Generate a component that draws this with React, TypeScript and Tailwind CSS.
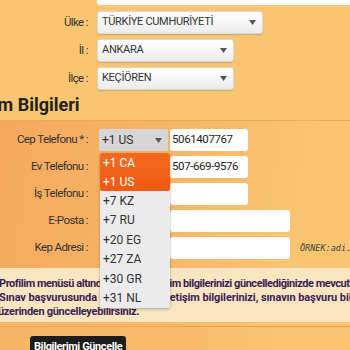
import React from "react";

const Arrow = () => (
  <svg width="7" height="5" viewBox="0 0 7 5" className="shrink-0">
    <path d="M0 0 L7 0 L3.5 5 Z" fill="#555" />
  </svg>
);

function Select({ text, w }: { text: string; w: string }) {
  return (
    <div
      className={`${w} h-[23px] shrink-0 flex items-center justify-between pl-[4px] pr-[6px] rounded-[3px] bg-gradient-to-b from-[#ffffff] to-[#ececec] border border-[#d8d8d8] shadow-[0_1px_1px_rgba(0,0,0,0.15)] text-[11px] tracking-[-0.3px] text-[#333] whitespace-nowrap`}
    >
      <span>{text}</span>
      <Arrow />
    </div>
  );
}

function Label({ children }: { children: React.ReactNode }) {
  return (
    <div className="w-[88px] shrink-0 text-right text-[11.5px] tracking-[-0.6px] text-[#333] leading-none whitespace-nowrap">
      {children}
    </div>
  );
}

function Input({ w, value }: { w: string; value?: string }) {
  return (
    <div
      className={`${w} h-[22px] shrink-0 bg-white rounded-[3px] flex items-center px-[2px] text-[11.5px] tracking-[-0.4px] text-[#222] whitespace-nowrap overflow-hidden`}
    >
      {value}
    </div>
  );
}

export default function App() {
  const opts = ["+7 KZ", "+7 RU", "+20 EG", "+27 ZA", "+30 GR", "+31 NL"];
  return (
    <div className="relative w-[350px] h-[350px] overflow-hidden bg-[#f9c570] font-['Roboto',sans-serif]">
      {/* top area */}
      <div className="h-[5px] ml-[97px] bg-white rounded-bl-[3px]" />
      <div className="flex flex-col gap-[5px] pt-[6px]">
        <div className="flex items-center gap-[9px]">
          <Label>Ülke :</Label>
          <Select text="TÜRKİYE CUMHURİYETİ" w="w-[166px]" />
        </div>
        <div className="flex items-center gap-[9px]">
          <Label>İl :</Label>
          <Select text="ANKARA" w="w-[137px]" />
        </div>
        <div className="flex items-center gap-[9px]">
          <Label>İlçe :</Label>
          <Select text="KEÇİÖREN" w="w-[137px]" />
        </div>
      </div>
      <div className="mt-[4px] -ml-[47px] text-[18px] font-bold text-[#222] leading-[22px] whitespace-nowrap">
        İletişim Bilgileri
      </div>
      <div className="mt-[4px] h-[1px] bg-[#e9a95e]" />
      {/* lower area */}
      <div className="relative bg-[linear-gradient(100deg,#f5a85e_0%,#f7b567_45%,#f9c570_80%)]">
        <div className="absolute left-[-60px] top-[150px] w-[260px] h-[120px] rounded-[50%] bg-[#f8bb6a] opacity-60 blur-[8px]" />
        <div className="relative flex flex-col gap-[5px] pt-[8px]">
          <div className="flex items-center gap-[11px]">
            <Label>Cep Telefonu * :</Label>
            <div className="flex items-center gap-[2px]">
              <div className="w-[69px] h-[22px] shrink-0 flex items-center justify-between pl-[3px] pr-[6px] bg-[#d6d6d6] rounded-[2px] text-[12px] text-[#333]">
                <span>+1 US</span>
                <Arrow />
              </div>
              <Input w="w-[78px]" value="5061407767" />
            </div>
          </div>
          <div className="flex items-center">
            <Label>Ev Telefonu :</Label>
            <div className="ml-[82px]">
              <Input w="w-[78px]" value="507-669-9576" />
            </div>
          </div>
          <div className="flex items-center">
            <Label>İş Telefonu :</Label>
            <div className="ml-[82px]">
              <Input w="w-[78px]" />
            </div>
          </div>
          <div className="flex items-center">
            <Label>E-Posta :</Label>
            <div className="ml-[82px]">
              <Input w="w-[120px]" />
            </div>
          </div>
          <div className="flex items-center">
            <Label>Kep Adresi :</Label>
            <div className="ml-[82px] flex items-center gap-[10px]">
              <Input w="w-[120px]" />
              <span className="text-[8.5px] italic text-[#444] font-['DejaVu_Sans_Mono',monospace] whitespace-nowrap">
                ÖRNEK:adi.soyadi@hs01.kep.tr
              </span>
            </div>
          </div>
        </div>
        <div className="relative mt-[9px] h-[54px] bg-[#f9e5bf] pt-[9px] -ml-[1px] text-[11px] font-bold text-[#3a1f55] leading-[14px] whitespace-nowrap">
          <div className="tracking-[-0.45px]">Profilim menüsü altında bulunan iletişim bilgilerinizi güncellediğinizde mevcut</div>
          <div className="tracking-[-0.1px]">Sınav başvurusunda kullandığınız iletişim bilgilerinizi, sınavın başvuru bilgileri</div>
          <div className="-ml-[1px] tracking-[-0.3px]">üzerinden güncelleyebilirsiniz.</div>
        </div>
        <div className="relative h-[4px]" />
        <div className="relative h-[1px] bg-[#ef9d55]" />
        <div className="relative pt-[6px] pl-[30px] h-[40px]">
          <div className="inline-flex items-center h-[22px] px-[4px] bg-[#1d1d1d] rounded-[3px] text-white text-[11px] tracking-[-0.4px] font-bold">
            Bilgilerimi Güncelle
          </div>
        </div>
      </div>
      {/* open dropdown list */}
      <div className="absolute left-[100px] top-[153px] w-[70px] h-[155px] bg-[#ebebeb] rounded-[2px] shadow-[0_1px_3px_rgba(0,0,0,0.3)] text-[12px] text-[#333]">
        <div className="rounded-[2px] overflow-hidden bg-gradient-to-b from-[#f26a1f] to-[#f05a12]">
          <div className="h-[19px] flex items-center pl-[3px] text-white">+1 CA</div>
          <div className="h-[19px] flex items-center pl-[3px] text-white">+1 US</div>
        </div>
        {opts.map((o) => (
          <div key={o} className="h-[19.5px] flex items-center pl-[3px]">
            {o}
          </div>
        ))}
      </div>
    </div>
  );
}
